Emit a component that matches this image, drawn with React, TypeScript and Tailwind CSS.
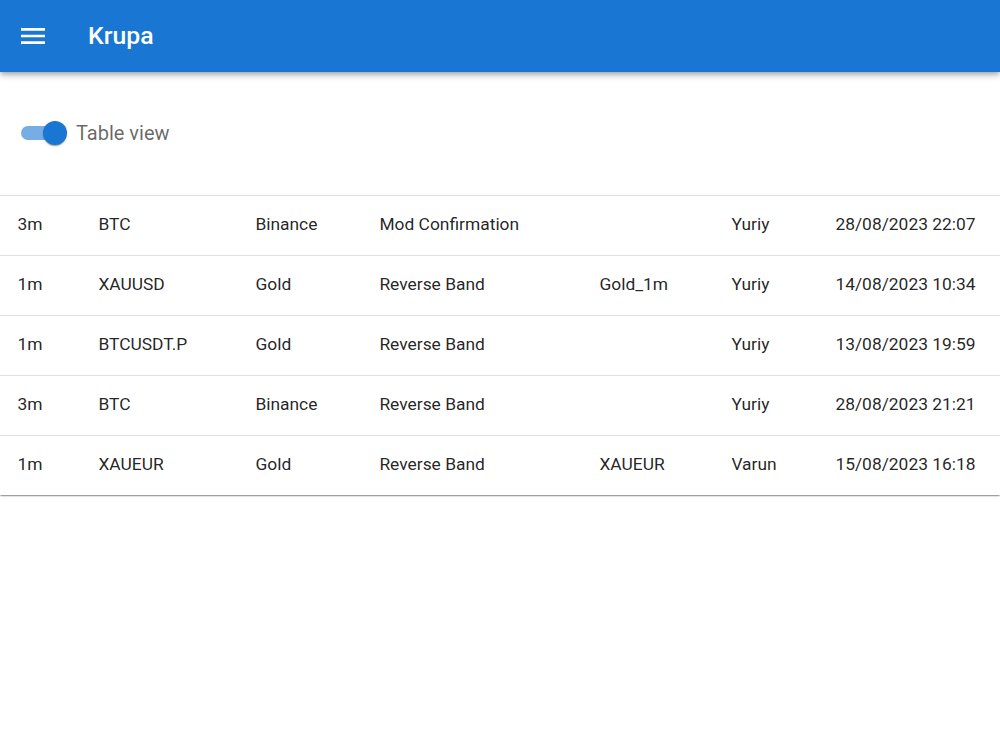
import React from "react";

const rows = [
  ["3m", "BTC", "Binance", "Mod Confirmation", "", "Yuriy", "28/08/2023 22:07"],
  ["1m", "XAUUSD", "Gold", "Reverse Band", "Gold_1m", "Yuriy", "14/08/2023 10:34"],
  ["1m", "BTCUSDT.P", "Gold", "Reverse Band", "", "Yuriy", "13/08/2023 19:59"],
  ["3m", "BTC", "Binance", "Reverse Band", "", "Yuriy", "28/08/2023 21:21"],
  ["1m", "XAUEUR", "Gold", "Reverse Band", "XAUEUR", "Varun", "15/08/2023 16:18"],
];

const widths = ["w-[81px]", "w-[157px]", "w-[124px]", "w-[220px]", "w-[132px]", "w-[104px]", "w-[182px]"];

export default function App() {
  return (
    <div className="min-h-screen bg-white font-['Roboto',sans-serif] text-[rgba(0,0,0,0.87)]">
      <header className="h-[72px] bg-[#1976d2] flex items-center pl-[17px] shadow-[0px_2px_4px_-1px_rgba(0,0,0,0.2),0px_4px_5px_0px_rgba(0,0,0,0.14),0px_1px_10px_0px_rgba(0,0,0,0.12)] relative z-10">
        <svg width="32" height="32" viewBox="0 0 24 24" className="fill-white">
          <path d="M3 18h18v-2H3zm0-5h18v-2H3zm0-7v2h18V6z" />
        </svg>
        <span className="ml-[39px] text-white text-[24.8px] font-medium leading-none">Krupa</span>
      </header>

      <div className="h-[123px] flex items-center pl-[21px] pb-[2px]">
        <div className="relative w-[47px] h-[24px] flex items-center">
          <div className="w-[38px] h-[14px] rounded-full bg-[#1976d2] opacity-60" />
          <div className="absolute left-[22px] top-0 w-[24px] h-[24px] rounded-full bg-[#1976d2] shadow-[0px_2px_1px_-1px_rgba(0,0,0,0.2),0px_1px_1px_0px_rgba(0,0,0,0.14),0px_1px_3px_0px_rgba(0,0,0,0.12)]" />
        </div>
        <span className="ml-[8px] text-[20px] text-[rgba(0,0,0,0.6)]">Table view</span>
      </div>

      <div className="bg-white shadow-[0px_2px_1px_-1px_rgba(0,0,0,0.2),0px_1px_1px_0px_rgba(0,0,0,0.14),0px_1px_3px_0px_rgba(0,0,0,0.12)] border-t border-[#e0e0e0]">
        <table className="w-full table-fixed border-collapse">
          <colgroup>
            {widths.map((w, i) => (
              <col key={i} className={w} />
            ))}
          </colgroup>
          <tbody>
            {rows.map((r, i) => (
              <tr key={i} className={i < rows.length - 1 ? "border-b border-[#e0e0e0]" : ""}>
                {r.map((c, j) => (
                  <td
                    key={j}
                    className={`${i === 0 ? "h-[59px]" : "h-[60px]"} px-[17.4px] pb-[2px] text-[17.4px] leading-[26px] text-left whitespace-nowrap`}
                  >
                    {c}
                  </td>
                ))}
              </tr>
            ))}
          </tbody>
        </table>
      </div>
    </div>
  );
}
